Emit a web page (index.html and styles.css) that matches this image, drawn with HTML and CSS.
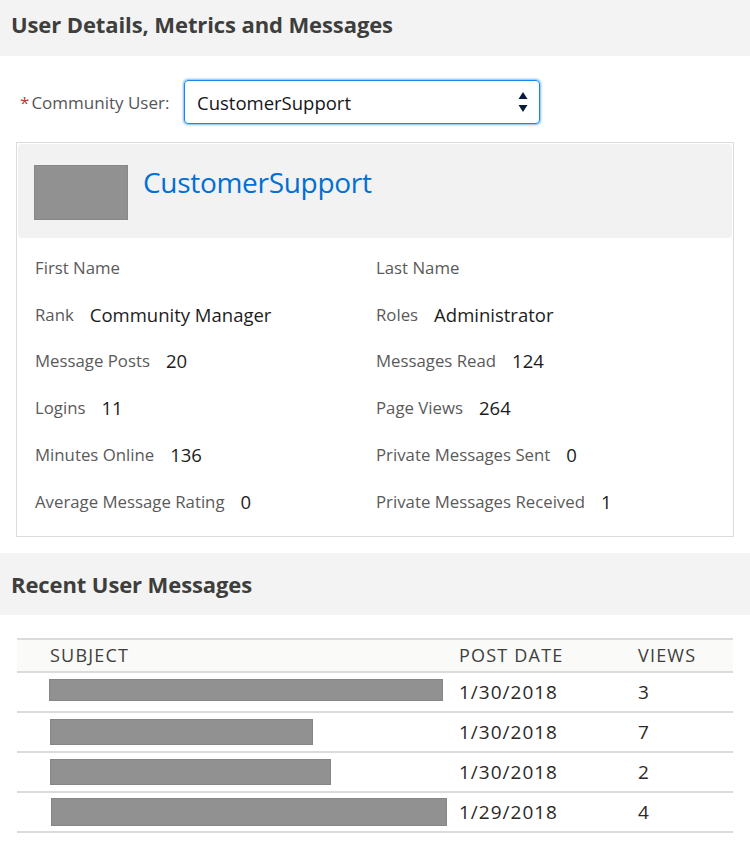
FILE: index.html
```html
<!DOCTYPE html>
<html>
<head>
<meta charset="utf-8">
<link rel="stylesheet" href="styles.css">
</head>
<body>
<div class="band band-top"><h1>User Details, Metrics and Messages</h1></div>

<div class="picker">
  <label class="picker-label"><span class="req">*</span>Community User:</label>
  <div class="select">
    <span class="select-value">CustomerSupport</span>
    <svg class="select-arrows" width="10" height="22" viewBox="0 0 10 22"><path d="M5 1 L9.5 8 L0.5 8 Z" fill="#061c3f"/><path d="M0.5 14 L9.5 14 L5 21 Z" fill="#061c3f"/></svg>
  </div>
</div>

<div class="card">
  <div class="card-head">
    <div class="avatar"></div>
    <div class="card-name">CustomerSupport</div>
  </div>
  <div class="fields">
    <div class="field"><span class="lbl">First Name</span></div>
    <div class="field"><span class="lbl">Last Name</span></div>
    <div class="field"><span class="lbl">Rank</span><span class="val">Community Manager</span></div>
    <div class="field"><span class="lbl">Roles</span><span class="val">Administrator</span></div>
    <div class="field"><span class="lbl">Message Posts</span><span class="val">20</span></div>
    <div class="field"><span class="lbl">Messages Read</span><span class="val">124</span></div>
    <div class="field"><span class="lbl">Logins</span><span class="val">11</span></div>
    <div class="field"><span class="lbl">Page Views</span><span class="val">264</span></div>
    <div class="field"><span class="lbl">Minutes Online</span><span class="val">136</span></div>
    <div class="field"><span class="lbl">Private Messages Sent</span><span class="val">0</span></div>
    <div class="field"><span class="lbl">Average Message Rating</span><span class="val">0</span></div>
    <div class="field"><span class="lbl">Private Messages Received</span><span class="val">1</span></div>
  </div>
</div>

<div class="band band-second"><h2>Recent User Messages</h2></div>

<table class="msgs">
  <thead>
    <tr><th class="c-subj">Subject</th><th class="c-date">Post Date</th><th class="c-views">Views</th></tr>
  </thead>
  <tbody>
    <tr><td class="c-subj"><div class="redact r1"></div></td><td class="c-date">1/30/2018</td><td class="c-views">3</td></tr>
    <tr><td class="c-subj"><div class="redact r2"></div></td><td class="c-date">1/30/2018</td><td class="c-views">7</td></tr>
    <tr><td class="c-subj"><div class="redact r3"></div></td><td class="c-date">1/30/2018</td><td class="c-views">2</td></tr>
    <tr><td class="c-subj"><div class="redact r4"></div></td><td class="c-date">1/29/2018</td><td class="c-views">4</td></tr>
  </tbody>
</table>
</body>
</html>
```

FILE: styles.css
```css
* { box-sizing: border-box; }
html, body { margin: 0; padding: 0; background: #fff; }
body {
  font-family: "Open Sans", "Liberation Sans", sans-serif;
  color: #3e3e3c;
  width: 750px;
}

.band {
  background: #f3f3f3;
  display: flex;
  align-items: center;
  padding-left: 11px;
}
.band h1, .band h2 {
  margin: 0;
  font-size: 22px;
  font-weight: 700;
  color: #3e3e3c;
  letter-spacing: -0.1px;
}
.band-top { height: 56px; padding-bottom: 8px; }
.band-second { height: 62px; margin-top: 16px; }

.picker {
  display: flex;
  align-items: center;
  margin-top: 24px;
  padding-left: 20px;
}
.picker-label {
  font-size: 17px;
  color: #54565a;
  width: 164px;
}
.req { color: #c23934; margin-right: 2px; }
.select {
  width: 356px;
  height: 44px;
  border: 1px solid #1589ee;
  border-radius: 4px;
  box-shadow: 0 0 3px #0070d2;
  display: flex;
  align-items: center;
  justify-content: space-between;
  padding: 0 11px 0 12px;
}
.select-value { font-size: 18.5px; color: #16161a; }
.select-arrows { display: block; }

.card {
  margin: 18px 16px 0 16px;
  border: 1px solid #dcdcdc;
  padding: 1px 1px 11px 1px;
}
.card-head {
  background: #f2f2f2;
  border-radius: 4px;
  height: 94px;
  display: flex;
  align-items: flex-start;
  padding: 21px 0 0 16px;
}
.avatar {
  width: 94px;
  height: 55px;
  background: #919191;
  border: 1px solid #888;
}
.card-name {
  margin-left: 15px;
  font-size: 28px;
  color: #0070d2;
  line-height: 36px;
  margin-top: -1px;
  letter-spacing: -0.3px;
}

.fields {
  display: grid;
  grid-template-columns: 341px 1fr;
  padding: 6px 0 0 17px;
}
.field {
  height: 46.8px;
  display: flex;
  align-items: center;
  font-size: 16.8px;
}
.lbl { color: #5a5a5a; }
.val { color: #1c1c1c; font-size: 18.5px; margin-left: 16px; }

.msgs {
  margin: 23px 17px 0 17px;
  width: 716px;
  border-collapse: collapse;
  table-layout: fixed;
}
.msgs th {
  background: #fafaf9;
  height: 33px;
  border-top: 2px solid #dddbda;
  border-bottom: 2px solid #dddbda;
  text-align: left;
  font-weight: 400;
  text-transform: uppercase;
  font-size: 18px;
  letter-spacing: 1.2px;
  color: #3e3e3c;
  padding: 0;
}
.msgs td {
  height: 40px;
  border-bottom: 2px solid #dddbda;
  padding: 0;
  font-size: 19px;
  letter-spacing: 1px;
  color: #2b2826;
}
.c-subj { width: 442px; padding-left: 33px !important; }
.c-date { width: 179px; }
.redact {
  background: #919191;
  border: 1px solid #868686;
  height: 24px;
}
.r1 { width: 394px; height: 22px; margin-left: -1px; margin-top: -4px; }
.r2 { width: 263px; height: 26px; }
.r3 { width: 281px; height: 26px; }
.r4 { width: 396px; height: 28px; margin-left: 1px; }
```
